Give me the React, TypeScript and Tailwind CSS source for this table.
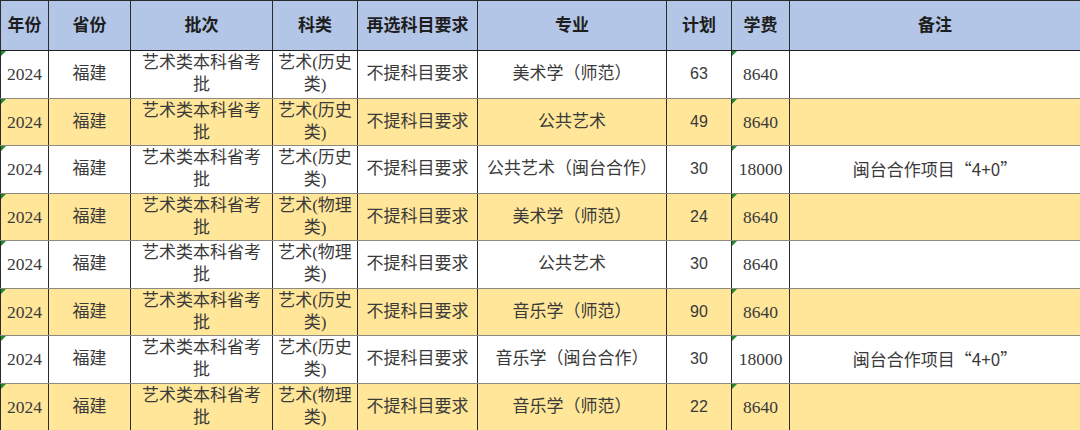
import React from "react";

type Row = {
  batch: string;
  subject: string;
  major: string;
  plan: string;
  fee: string;
  note: string;
};

const rows: Row[] = [
  { batch: "艺术类本科省考批", subject: "艺术(历史类)", major: "美术学（师范）", plan: "63", fee: "8640", note: "" },
  { batch: "艺术类本科省考批", subject: "艺术(历史类)", major: "公共艺术", plan: "49", fee: "8640", note: "" },
  { batch: "艺术类本科省考批", subject: "艺术(历史类)", major: "公共艺术（闽台合作）", plan: "30", fee: "18000", note: "闽台合作项目“4+0”" },
  { batch: "艺术类本科省考批", subject: "艺术(物理类)", major: "美术学（师范）", plan: "24", fee: "8640", note: "" },
  { batch: "艺术类本科省考批", subject: "艺术(物理类)", major: "公共艺术", plan: "30", fee: "8640", note: "" },
  { batch: "艺术类本科省考批", subject: "艺术(历史类)", major: "音乐学（师范）", plan: "90", fee: "8640", note: "" },
  { batch: "艺术类本科省考批", subject: "艺术(历史类)", major: "音乐学（闽台合作）", plan: "30", fee: "18000", note: "闽台合作项目“4+0”" },
  { batch: "艺术类本科省考批", subject: "艺术(物理类)", major: "音乐学（师范）", plan: "22", fee: "8640", note: "" },
];

const headers = ["年份", "省份", "批次", "科类", "再选科目要求", "专业", "计划", "学费", "备注"];
const widths = ["w-[48px]", "w-[82px]", "w-[142px]", "w-[85px]", "w-[120px]", "w-[189px]", "w-[65px]", "w-[58px]", "w-[291px]"];

const serif = "[font-family:'Liberation_Serif','Noto_Sans_CJK_SC',serif]";
const sans = "[font-family:'Liberation_Sans','Noto_Sans_CJK_SC',sans-serif]";
const cjk = "[font-family:'Noto_Sans_CJK_SC',sans-serif]";
const cell = "border-x border-x-[#2b2b2b] border-b border-b-[#8c8a80] text-center align-middle leading-[22px]";

// little green "number stored as text" marker from excel
const Flag = () => (
  <span className="absolute left-0 top-0 h-0 w-0 border-r-[5px] border-t-[5px] border-r-transparent border-t-[#1f8a2e]" />
);

export default function App() {
  return (
    <div className="h-[430px] w-[1080px] overflow-hidden bg-white">
      <table className="w-[1080px] table-fixed border-collapse text-[17px] text-[#3a3a3a]">
        <colgroup>
          {widths.map((w, i) => (
            <col key={i} className={w} />
          ))}
        </colgroup>
        <thead>
          <tr className="h-[50px] bg-[#b4c6e7]">
            {headers.map((h) => (
              <th
                key={h}
                className={`border border-[#2b2b2b] border-b-[#1f1f1f] font-bold text-[#1e1e1e] ${sans}`}
              >
                {h}
              </th>
            ))}
          </tr>
        </thead>
        <tbody>
          {rows.map((r, i) => (
            <tr key={i} className={`h-[47.5px] ${i % 2 ? "bg-[#ffe699]" : "bg-white"}`}>
              <td className={`relative ${cell} text-[17.5px] ${serif}`}>
                <Flag />
                2024
              </td>
              <td className={`${cell} ${serif}`}>福建</td>
              <td className={`${cell} px-2 ${serif}`}>{r.batch}</td>
              <td className={`${cell} px-1 ${serif}`}>{r.subject}</td>
              <td className={`${cell} ${serif}`}>不提科目要求</td>
              <td className={`${cell} ${serif}`}>{r.major}</td>
              <td className={`${cell} text-[16px] ${sans}`}>{r.plan}</td>
              <td className={`relative ${cell} text-[17.5px] ${serif}`}>
                <Flag />
                {r.fee}
              </td>
              <td className={`${cell} ${cjk}`}>{r.note}</td>
            </tr>
          ))}
        </tbody>
      </table>
    </div>
  );
}
